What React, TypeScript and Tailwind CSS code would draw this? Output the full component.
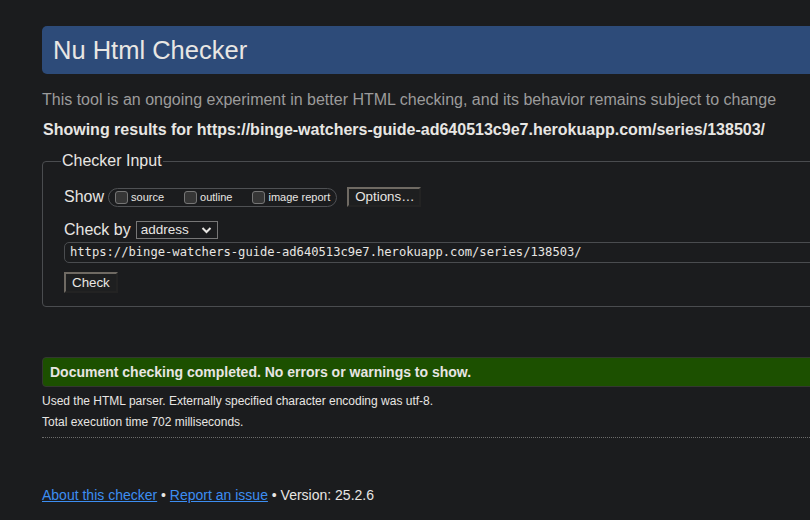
const SANS = "font-['Liberation_Sans',Arial,sans-serif]";

function Box({ label }: { label: string }) {
  return (
    <span className="flex items-center">
      <span className="mr-[3px] h-[13px] w-[13px] rounded-[3px] border border-[#767676] bg-[#363636]"></span>
      <span className="text-[11px] leading-[13px] text-[#e8e6e3]">{label}</span>
    </span>
  );
}

export default function App() {
  return (
    <div className={`h-[520px] w-[810px] overflow-hidden bg-[#1b1c1e] text-[#e8e6e3] ${SANS}`}>
      <div className="w-[1100px] pl-[42px] pt-[26px]">
        <div className="flex h-[48px] items-center rounded-[5px] bg-[#2d4b79] pl-[11px] text-[25.5px]">Nu Html Checker</div>

        <div className="mt-[16px] h-[20px] text-[16px] leading-[20px] text-[#9b9b9b]">
          This tool is an ongoing experiment in better HTML checking, and its behavior remains subject to change
        </div>
        <div className="mt-[10px] h-[20px] pl-[1px] text-[16px] font-bold leading-[20px]">
          Showing results for https://binge-watchers-guide-ad640513c9e7.herokuapp.com/series/138503/
        </div>

        <fieldset className="mt-[12px] rounded-[4px] border border-[#4a4c4f] px-[21px] pb-[13px]">
          <legend className="ml-[-3px] px-[1px] text-[16px] leading-[18px]">Checker Input</legend>

          <div className="mt-[17px] flex h-[20px] items-center">
            <span className="text-[16px] leading-[20px]">Show</span>
            <div className="ml-[4px] flex h-[19px] items-center gap-[20px] rounded-full border border-[#4f5154] pl-[6px] pr-[6px]">
              <Box label="source" />
              <Box label="outline" />
              <Box label="image report" />
            </div>
            <button
              type="button"
              className="ml-[10px] h-[20px] w-[74px] border-2 border-b-[#232323] border-l-[#6f6a63] border-r-[#232323] border-t-[#6f6a63] bg-[#1e1f20] pl-[6px] text-left text-[13.33px] leading-[16px] text-[#e8e6e3]"
            >
              Options…
            </button>
          </div>

          <div className="mt-[14px] flex h-[18px] items-center">
            <span className="text-[16px] leading-[18px]">Check by</span>
            <div className="ml-[5px] flex h-[18px] w-[82px] items-center justify-between border border-[#777] bg-[#1b1c1e] pl-[4px] pr-[5px]">
              <span className="text-[13.5px] leading-[16px]">address</span>
              <svg width="11" height="8" viewBox="0 0 11 8" fill="none">
                <path d="M1.5 2l4 4 4-4" stroke="#e8e6e3" strokeWidth="2" />
              </svg>
            </div>
          </div>

          <div className="mt-[3px] flex h-[21px] items-center rounded-[5px] border border-[#4a4c4f] pl-[5px] font-['DejaVu_Sans_Mono',monospace] text-[12.15px] leading-[19px]">
            https://binge-watchers-guide-ad640513c9e7.herokuapp.com/series/138503/
          </div>

          <button
            type="button"
            className="mt-[9px] block h-[21px] w-[54px] border-2 border-b-[#232323] border-l-[#6f6a63] border-r-[#232323] border-t-[#6f6a63] bg-[#1e1f20] pl-[6px] text-left text-[13.33px] leading-[16px] text-[#e8e6e3]"
          >
            Check
          </button>
        </fieldset>

        <div className="mt-[50px] flex h-[30px] items-center rounded-[4px] border border-[#33382f] bg-[#1c5000] pl-[7px] text-[14px] font-bold">
          Document checking completed. No errors or warnings to show.
        </div>

        <div className="mt-[6px] text-[12px] leading-[16px]">Used the HTML parser. Externally specified character encoding was utf-8.</div>
        <div className="mt-[5px] text-[12px] leading-[16px]">Total execution time 702 milliseconds.</div>
        <div className="mt-[7px] border-t border-dotted border-[#6c6c6c]"></div>

        <div className="mt-[48px] text-[14px] leading-[18px]">
          <a href="#" className="text-[#3d8ef2] underline">About this checker</a>
          {" • "}
          <a href="#" className="text-[#3d8ef2] underline">Report an issue</a>
          {" • Version: 25.2.6"}
        </div>
      </div>
    </div>
  );
}
